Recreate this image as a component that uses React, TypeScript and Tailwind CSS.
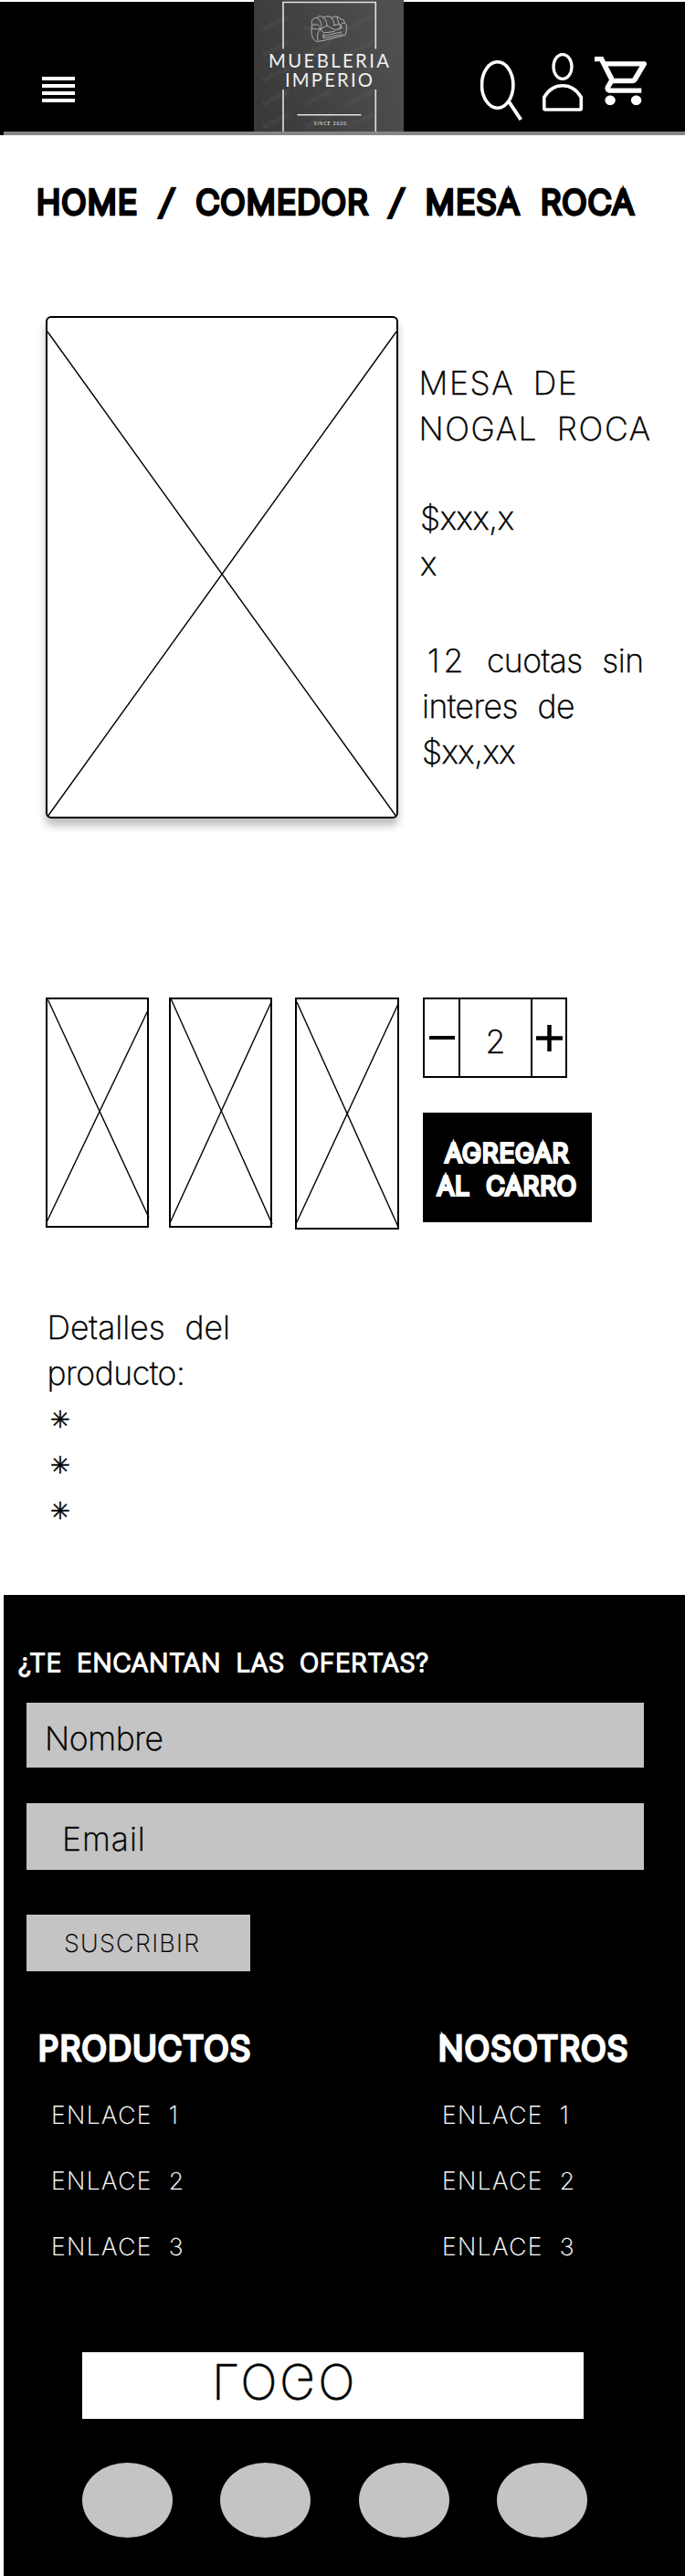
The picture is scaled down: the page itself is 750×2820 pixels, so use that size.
import type { ReactNode } from "react";

type Segment = [number, number, number, number];

function Placeholder({ className, width, height, lines }: { className: string; width: number; height: number; lines: Segment[] }) {
  return (
    <div className={className}>
      <svg className="block overflow-visible" width={width} height={height} viewBox={`0 0 ${width} ${height}`} fill="none" stroke="black" strokeWidth="1.4">
        {lines.map(([x1, y1, x2, y2], i) => (
          <line key={i} x1={x1} y1={y1} x2={x2} y2={y2} />
        ))}
      </svg>
    </div>
  );
}

function Watermarks() {
  const marks: [number, number][] = [];
  for (const x of [11, 57, 103]) for (const y of [34, 62, 90, 116, 141]) marks.push([x, y]);
  return (
    <g fontFamily="Lato, sans-serif" fontWeight="700" fontSize="7.500" fill="none" stroke="#6a6a6a" strokeOpacity="0.4" strokeWidth="0.4">
      {marks.map(([x, y], i) => (
        <text key={i} x={x} y={y} transform={`rotate(-27 ${x} ${y})`}>turbologo</text>
      ))}
    </g>
  );
}

function BrandLogo() {
  return (
    <svg className="block [-webkit-text-stroke:0]" width="164" height="144" viewBox="0 0 164 144">
      <defs>
        <linearGradient id="brand" x1="0" y1="0.6" x2="1" y2="0.3">
          <stop offset="0" stopColor="#3a3a3a" />
          <stop offset="1" stopColor="#505050" />
        </linearGradient>
      </defs>
      <rect width="164" height="144" fill="url(#brand)" />
      <Watermarks />
      <g stroke="#e2e2e2" strokeWidth="1.6" fill="none">
        <path d="M32 53.5V2.5H133.3V53.5M32 98V144M133.3 98V144" />
        <path d="M47.5 125.7H117.5" />
      </g>
      <g stroke="#c9c9c9" strokeWidth="0.8" fill="none" strokeLinejoin="round" strokeLinecap="round">
        <path d="M64 28C62 23 64 19.500 69 19.500C70 17.500 74 17 76 19C79 17.500 83 17.500 85 19.500C89 17 93 18 95 21C98 21 99 23 99.500 25" />
        <path d="M65 27C70 26 72 28 73 32M69 19.500C73 21 74 26 74 30M76 19C79 22 80 25 80 28M85 19.500C87 22 88 25 88 28M91 19C92 22 92.500 24 93 26" />
        <path d="M63.500 28C62.500 32 63 38 64.500 42L68.500 45.500L76 44.500L100 38.500C101.500 35 101.500 30 101 27C100 24 96 25 95 27L94 32" />
        <path d="M63.500 31C67 33 70 31 73 32C70 34 69 38 70 44M73 32L80 28L89 33L96 30.500M72 32L77 36L88 34.500M88 27.500L94 26.500L97 30M76 37V42L97 37.500M76 39.500L96 35" />
      </g>
      <g fill="#f0f0f0" fontFamily="Lato, sans-serif" fontWeight="400">
        <text x="16" y="73.700" fontSize="20.300" textLength="132" lengthAdjust="spacing">MUEBLERIA</text>
        <text x="34" y="94.500" fontSize="20.300" textLength="96" lengthAdjust="spacing">IMPERIO</text>
        <text x="65.800" y="137" fontSize="4.800" textLength="35" lengthAdjust="spacing">SINCE 2020</text>
      </g>
    </svg>
  );
}

function Header() {
  return (
    <header className="h-[148px]">
      <div className="flex h-[144px] items-start bg-[linear-gradient(to_bottom,white_2px,black_2px)]">
        <button className="mt-[84px] ml-[46px] flex w-9 flex-col gap-1">
          <span className="h-1 w-9 bg-white" />
          <span className="h-1 w-9 bg-white" />
          <span className="h-1 w-9 bg-white" />
          <span className="h-1 w-9 bg-white" />
        </button>
        <div className="ml-[196px]">
          <BrandLogo />
        </div>
        <nav className="ml-[84px] flex items-start">
          <svg className="mt-[64px] block" width="50" height="70" viewBox="526 64 50 70" fill="none" stroke="white">
            <ellipse cx="544.7" cy="93" rx="17.200" ry="25.200" strokeWidth="3.600" />
            <path d="M557.300 111.500L570.300 131" strokeWidth="4" />
          </svg>
          <svg className="mt-[56px] ml-[16px] block" width="50" height="68" viewBox="592 56 50 68" fill="none" stroke="white">
            <ellipse cx="616" cy="73" rx="10" ry="13.300" strokeWidth="3.300" />
            <path d="M595.800 106.500C600 99 607 93.700 616 93.700S632 99 636.300 106.500V118.500Q636.300 120 635 120H597Q595.800 120 595.800 118.500Z" strokeWidth="3.600" strokeLinejoin="round" />
          </svg>
          <svg className="mt-[62px] ml-[9px] block" width="57" height="53" viewBox="1 2 20 20" preserveAspectRatio="none" fill="white">
            <path d="M15.550 13c.750 0 1.410-.410 1.750-1.030l3.580-6.490A.996.996 0 0 0 20.010 4H5.210l-.940-2H1v2h2l3.600 7.590-1.350 2.440C4.520 15.370 5.480 17 7 17h12v-2H7l1.100-2h7.450zM6.160 6h12.150l-2.760 5H8.530L6.160 6zM7 18c-1.100 0-1.990.900-1.990 2S5.900 22 7 22s2-.900 2-2-.900-2-2-2zm10 0c-1.100 0-1.990.900-1.990 2s.890 2 1.990 2 2-.900 2-2-.900-2-2-2z" />
          </svg>
        </nav>
      </div>
      <div className="h-1 border-l-4 border-black bg-[#858585]" />
    </header>
  );
}

function Bullet() {
  return <li className="h-[50px] font-['DejaVu_Sans'] text-[26px] leading-[50px]">✳</li>;
}

function LinkColumn({ title, className, children }: { title: string; className: string; children?: ReactNode }) {
  return (
    <div className={className}>
      <h2 className="text-[35.5px] leading-[50px] tracking-[1.8px] [-webkit-text-stroke:4.3px_white]">{title}</h2>
      {children}
    </div>
  );
}

function Links({ className }: { className: string }) {
  return (
    <ul className={className}>
      <li>ENLACE 1</li>
      <li>ENLACE 2</li>
      <li>ENLACE 3</li>
    </ul>
  );
}

export default function App() {
  return (
    <div className="h-[2820px] w-[750px] overflow-hidden bg-white font-['Inter',sans-serif] font-[200] whitespace-nowrap text-black [-webkit-text-stroke-width:0.5px]">
      <Header />

      <h1 className="mt-[49px] h-[50px] pl-[40px] text-[35.5px] leading-[50px] tracking-[1.4px] [word-spacing:11px] [-webkit-text-stroke:4.3px_black]">
        HOME <span className="inline-block -skew-x-[10deg] px-[2.5px]">/</span> COMEDOR <span className="inline-block -skew-x-[10deg] px-[2px]">/</span> MESA ROCA
      </h1>

      <main className="mt-[99px] flex h-[550px] pl-[50px]">
        <Placeholder
          className="h-[550px] w-[386px] rounded-[6px] border-2 border-black shadow-[0_8px_8px_rgba(0,0,0,0.25)]"
          width={382}
          height={546}
          lines={[[0, 15, 382, 546], [382, 15, 0, 546]]}
        />
        <div className="pt-[49px] pl-[22.500px] text-[35.5px] leading-[50px]">
          <h2 className="tracking-[1.6px] [word-spacing:9px]">
            MESA DE
            <br />
            NOGAL ROCA
          </h2>
          <p className="mt-[48px] pl-[1.500px] tracking-[-0.4px]">
            $xxx,x
            <br />
            x
          </p>
          <p className="mt-[56px] pl-[3.5px] tracking-[-0.5px] [word-spacing:12px]">
            <span className="pl-[6px] tracking-[4px]">12</span> cuotas sin
            <br />
            interes de
            <br />
            $xx,xx
          </p>
        </div>
      </main>

      <section className="mt-[196px] flex h-[254px] items-start pl-[50px]">
        <Placeholder className="h-[252px] w-[113px] border-2 border-black" width={109} height={248} lines={[[0.5, 0.5, 111, 239], [110, 12, -0.5, 243]]} />
        <Placeholder className="ml-[22px] h-[252px] w-[113px] border-2 border-black" width={109} height={248} lines={[[-0.5, -2, 111, 246], [110, 3, -1.5, 246]]} />
        <Placeholder className="ml-[25px] h-[254px] w-[114px] border-2 border-black" width={110} height={250} lines={[[0, 3, 111, 249], [111, 5, -1, 246]]} />
        <div className="ml-[26px]">
          <div className="flex h-[88px] w-[158px] border-2 border-black">
            <button className="flex w-[37px] items-center justify-center">
              <span className="h-[4.500px] w-7 bg-black" />
            </button>
            <span className="w-[81px] border-x-2 border-black pt-[22px] text-center text-[35.5px] leading-[50px]">2</span>
            <button className="flex w-[36px] items-center justify-center">
              <svg className="block" width="29" height="29" viewBox="0 0 29 29" stroke="black" strokeWidth="4.500">
                <path d="M0 14.500H29M14.500 0V29" />
              </svg>
            </button>
          </div>
          <button className="mt-[38px] flex h-[120px] w-[185px] flex-col items-center bg-black pt-[26px] text-[27.5px] leading-[36px] tracking-[1.4px] text-white [word-spacing:8px] [-webkit-text-stroke:4px_white]">
            <span>AGREGAR</span>
            <span>AL CARRO</span>
          </button>
        </div>
      </section>

      <section className="mt-[83px] h-[317px] pl-[51.5px] text-[35.5px] leading-[50px] [word-spacing:12px]">
        <h3>
          Detalles del
          <br />
          <span className="tracking-[-0.4px]">producto:</span>
        </h3>
        <ul className="pl-[3px]">
          <Bullet />
          <Bullet />
          <Bullet />
        </ul>
      </section>

      <footer className="ml-1 h-[1074px] bg-black text-white">
        <div className="pt-[54px] pl-[16px] text-[27.5px] leading-[40px] tracking-[1px] [word-spacing:7.5px] [-webkit-text-stroke:2.2px_white]">
          ¿TE ENCANTAN LAS OFERTAS?
        </div>
        <form className="pl-[24.500px] text-black">
          <div className="mt-[24px] h-[71px] w-[676.5px] bg-[#c4c4c4] pt-[15px] pl-[20.5px] text-[35.5px] leading-[50px] tracking-[-0.4px]">Nombre</div>
          <div className="mt-[39px] h-[72.5px] w-[676.500px] bg-[#c4c4c4] pt-[15px] pl-[39.5px] text-[35.5px] leading-[50px] tracking-[1px]">Email</div>
          <button className="mt-[49px] block h-[62px] w-[245.5px] bg-[#c4c4c4] pt-[3px] pl-[41.5px] text-left text-[27px] tracking-[1.3px] [-webkit-text-stroke-width:0.2px]">SUSCRIBIR</button>
        </form>
        <div className="mt-[60px] flex [-webkit-text-stroke-width:0.2px]">
          <LinkColumn title="PRODUCTOS" className="w-[438px] pl-[38px]">
            <Links className="mt-[11px] pl-[14px] text-[26.5px] leading-[72px] tracking-[1.4px] [word-spacing:9px]" />
          </LinkColumn>
          <LinkColumn title="NOSOTROS" className="pl-[38px]">
            <Links className="mt-[11px] pl-[4px] text-[26.5px] leading-[72px] tracking-[1.4px] [word-spacing:9px]" />
          </LinkColumn>
        </div>
        <div className="mt-[80px] ml-[86px] h-[73px] w-[549px] bg-white pl-[142px] text-black">
          <span className="block w-fit -scale-y-100 text-[53.5px] leading-[64px] tracking-[2.6px]">LOGO</span>
        </div>
        <div className="mt-[48px] ml-[86px] flex gap-[52.3px]">
          <span className="h-[82px] w-[99px] rounded-[50%] bg-[#c4c4c4]" />
          <span className="h-[82px] w-[99px] rounded-[50%] bg-[#c4c4c4]" />
          <span className="h-[82px] w-[99px] rounded-[50%] bg-[#c4c4c4]" />
          <span className="h-[82px] w-[99px] rounded-[50%] bg-[#c4c4c4]" />
        </div>
      </footer>
    </div>
  );
}
